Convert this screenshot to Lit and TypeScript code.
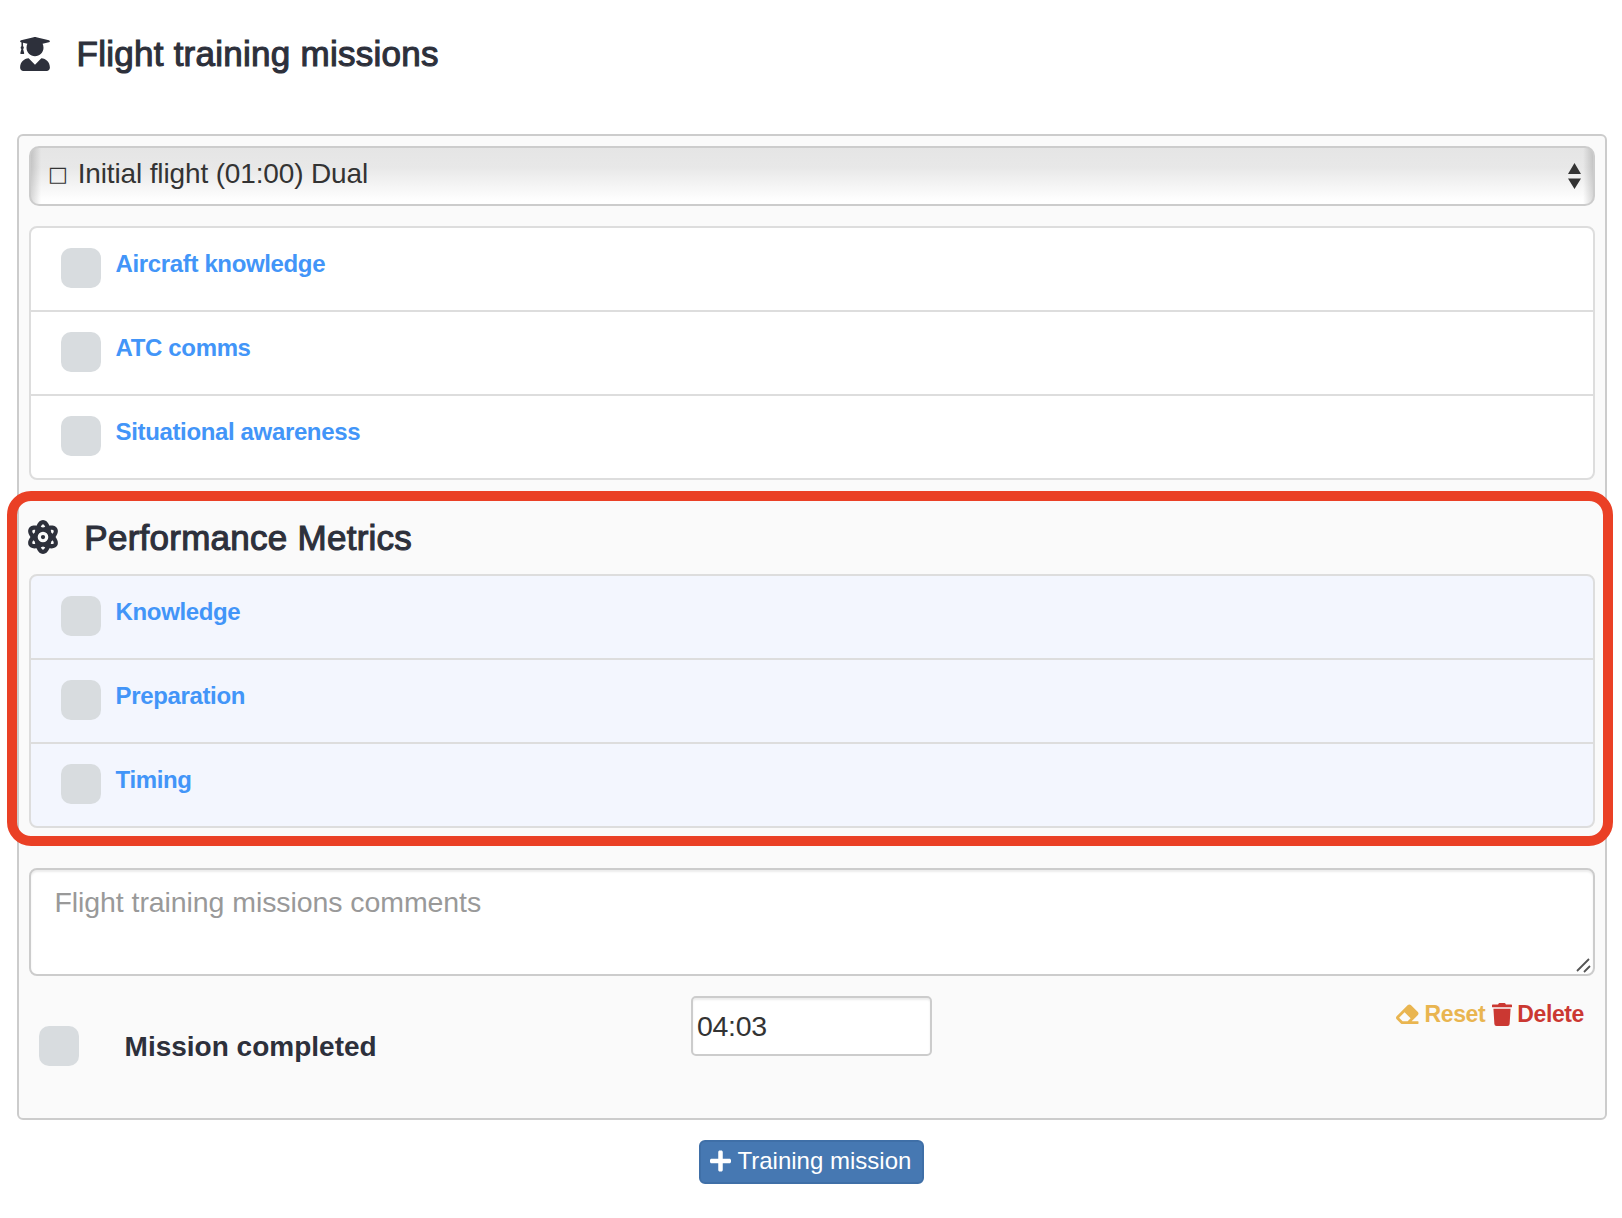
import { LitElement, html, css, svg } from "lit";
import { customElement, property } from "lit/decorators.js";

const ICONS: Record<string, { box: string; d: string }> = {
  graduate: {
    box: "0 0 448 512",
    d: "M319.4 320.6L224 416l-95.4-95.4C57.1 323.7 0 382.2 0 454.4v9.6c0 26.5 21.5 48 48 48h352c26.5 0 48-21.5 48-48v-9.6c0-72.2-57.1-130.7-128.6-133.8zM13.6 79.8l6.4 1.5v58.4c-7 4.2-12 11.5-12 20.3 0 8.4 4.6 15.4 11.1 19.7L3.5 242c-1.7 6.9 2.1 14 7.6 14h41.8c5.5 0 9.3-7.1 7.6-14l-15.6-62.3C51.4 175.4 56 168.4 56 160c0-8.8-5-16.1-12-20.3V87.1l66 15.9c-8.6 17.2-14 36.4-14 57 0 70.7 57.3 128 128 128s128-57.3 128-128c0-20.6-5.3-39.8-14-57l96.3-23.2c18.2-4.4 18.2-27.1 0-31.5l-190.4-46c-13-3.1-26.7-3.1-39.7 0L13.6 48.2c-18.1 4.5-18.1 27.2 0 31.6z",
  },
  atom: {
    box: "0 0 448 512",
    d: "M224 224a32 32 0 1 0 32 32A32.06 32.06 0 0 0 224 224Zm214.172-96c-10.877-19.5-40.51-50.75-116.275-41.875C300.392 34.875 267.634 0 224 0s-76.39 34.875-97.897 86.125C50.337 77.375 20.706 108.5 9.829 128-6.55 157.375-5.175 201.125 34.958 256-5.175 310.875-6.55 354.625 9.829 384c29.131 52.375 101.647 43.625 116.274 41.875C147.608 477.125 180.364 512 224 512s76.393-34.875 97.897-86.125c14.629 1.75 87.145 10.5 116.275-41.875C454.55 354.625 453.175 310.875 413.04 256 453.175 201.125 454.55 157.375 438.171 128ZM63.339 352c-4-7.25-.125-24.75 15.004-48.25 6.877 6.5 14.129 12.875 21.881 19.125 1.625 13.75 4 27.125 6.75 40.125C82.345 363.875 67.091 358.625 63.339 352Zm36.885-162.875c-7.752 6.25-15.004 12.625-21.881 19.125-15.129-23.5-19.004-41-15.004-48.25 3.377-6.125 16.379-11.5 37.885-11.5 1.75 0 3.875.375 5.75.375C104.099 162.25 101.849 175.625 100.224 189.125ZM224 64c9.502 0 22.256 13.5 33.883 37.25-11.252 3.75-22.504 8-33.883 12.875-11.377-4.875-22.629-9.125-33.883-12.875C201.745 77.5 214.497 64 224 64Zm0 384c-9.502 0-22.254-13.5-33.883-37.25 11.254-3.75 22.506-8 33.883-12.875C235.378 402.75 246.63 407 257.882 410.75 246.255 434.5 233.501 448 224 448Zm0-112a80 80 0 1 1 80-80A80 80 0 0 1 224 336ZM384.659 352c-3.625 6.625-19.004 11.875-43.635 11 2.752-13 5.127-26.375 6.752-40.125 7.752-6.25 15.004-12.625 21.879-19.125C384.784 327.25 388.659 344.75 384.659 352ZM369.655 208.25c-6.875-6.5-14.127-12.875-21.879-19.125-1.625-13.5-3.875-26.875-6.752-40.25 1.875 0 4.002-.375 5.752-.375 21.504 0 34.508 5.375 37.883 11.5C388.659 167.25 384.784 184.75 369.655 208.25Z",
  },
  eraser: {
    box: "0 0 512 512",
    d: "M497.941 273.941c18.745-18.745 18.745-49.137 0-67.882l-160-160c-18.745-18.745-49.136-18.746-67.883 0l-256 256c-18.745 18.745-18.745 49.137 0 67.882l96 96A48.004 48.004 0 0 0 144 480h356c6.627 0 12-5.373 12-12v-40c0-6.627-5.373-12-12-12H355.883l142.058-142.059zm-302.627-62.627l137.373 137.373L265.373 416H150.628l-80-80 124.686-124.686z",
  },
  trash: {
    box: "0 0 448 512",
    d: "M432 32H312l-9.4-18.7A24 24 0 0 0 281.1 0H166.8a23.72 23.72 0 0 0-21.4 13.3L136 32H16A16 16 0 0 0 0 48v32a16 16 0 0 0 16 16h416a16 16 0 0 0 16-16V48a16 16 0 0 0-16-16zM32 128L53.2 467a48 48 0 0 0 47.9 45h245.8a48 48 0 0 0 47.9-45L416 128H32z",
  },
  plus: {
    box: "0 0 448 512",
    d: "M416 208H272V64c0-17.67-14.33-32-32-32h-32c-17.67 0-32 14.33-32 32v144H32c-17.67 0-32 14.33-32 32v32c0 17.67 14.33 32 32 32h144v144c0 17.67 14.33 32 32 32h32c17.67 0 32-14.33 32-32V304h144c17.67 0 32-14.33 32-32v-32c0-17.67-14.33-32-32-32z",
  },
};

@customElement("ui-icon")
class UiIcon extends LitElement {
  @property() name = "plus";
  static styles = css`
    :host { display: block; flex: none; }
    svg { display: block; width: 100%; height: 100%; fill: currentColor; }
  `;
  render() {
    const icon = ICONS[this.name];
    return html`<svg viewBox=${icon.box} aria-hidden="true">${svg`<path d=${icon.d}></path>`}</svg>`;
  }
}

@customElement("check-list")
class CheckList extends LitElement {
  @property({ attribute: false }) items: string[] = [];
  static styles = css`
    :host { display: block; border: 2px solid #ddd; border-radius: 8px; background: var(--list-bg, #fff); }
    .row { display: flex; align-items: flex-start; box-sizing: border-box; height: 82px; padding: 20px 30px 0; }
    .row + .row { border-top: 2px solid #ddd; height: 84px; }
    .box { width: 40px; height: 40px; border-radius: 10px; background: #d8dcdf; flex: none; }
    .label { margin: 4px 0 0 14.6px; font-size: 24px; line-height: 24px; font-weight: 700; letter-spacing: -0.36px; color: #4295f8; white-space: nowrap; }
  `;
  render() {
    return html`${this.items.map(
      (item) => html`<div class="row"><span class="box"></span><span class="label">${item}</span></div>`
    )}`;
  }
}

@customElement("app-root")
class AppRoot extends LitElement {
  static styles = css`
    :host {
      display: block;
      box-sizing: border-box;
      width: 1622px;
      height: 1218px;
      background: #fff;
      color: #2d303b;
      font-family: "Liberation Sans", Arial, sans-serif;
      overflow: hidden;
    }
    * { box-sizing: border-box; }
    .title { display: flex; align-items: center; height: 36px; margin: 0; font-size: 35px; line-height: 36px; font-weight: 400; letter-spacing: 0.26px; -webkit-text-stroke: 1.1px currentColor; white-space: nowrap; }
    .title ui-icon { width: 30px; height: 34px; -webkit-text-stroke: 0; }
    .page-title { padding: 35px 0 0 20px; height: 72px; }
    .page-title span { margin: 1px 0 0 26.5px; }
    .panel { margin: 62px 15px 0 17px; height: 986px; padding: 10px; border: 2px solid #ccc; border-radius: 6px; background: #fafafa; }
    .select { display: flex; align-items: center; height: 60px; padding: 0 12px 4px 17px; border: 2px solid #ccc; border-radius: 10px; color: #333; font-size: 28px; line-height: 32px; letter-spacing: -0.14px;
      background:
        linear-gradient(90deg, rgba(0,0,0,.15), transparent 10px, transparent calc(100% - 10px), rgba(0,0,0,.15)),
        linear-gradient(#e5e5e5, #e8e8e8 35%, #fff 94%); }
    .mark { font-family: "DejaVu Sans", sans-serif; font-size: 21px; width: 29.7px; }
    .option { flex: 1; white-space: nowrap; }
    .arrows { width: 13px; height: 26px; margin-top: 4px; fill: #333; }
    .missions { margin-top: 20px; }
    .metrics { position: relative; margin-top: 38px; }
    .metrics check-list { --list-bg: #f3f6fe; margin-top: 18px; }
    .metrics .title { height: 38px; margin-left: -1px; }
    .metrics .title span { margin: 1px 0 0 26.3px; }
    .highlight { position: absolute; left: -22px; right: -18px; top: -27px; bottom: -18px; border: 10px solid #ea4025; border-radius: 24px; }
    .comments { position: relative; height: 108px; margin-top: 40px; padding: 16px 23.5px; border: 2px solid #ccc; border-radius: 8px; background: #fff; box-shadow: inset 0 2px 2px rgba(0,0,0,.075); color: #999; font-size: 28.5px; line-height: 32px; letter-spacing: -0.08px; }
    .grip { position: absolute; right: 2px; bottom: 1px; width: 15px; height: 15px; stroke: #555; stroke-width: 1.8; fill: none; }
    .footer { display: grid; grid-template-columns: 662px 1fr auto; align-items: start; padding-top: 20px; }
    .completed { display: flex; align-items: center; gap: 45.6px; padding: 30px 0 0 10px; font-size: 28px; font-weight: 700; line-height: 40px; }
    .completed .name { padding-top: 1px; margin-bottom: -1px; }
    .box { width: 40px; height: 40px; border-radius: 10px; background: #d8dcdf; }
    .time { width: 241px; height: 60px; padding: 12px 4px; border: 2px solid #ccc; border-radius: 5px; background: #fff; box-shadow: inset 0 2px 2px rgba(0,0,0,.075); color: #333; font-size: 28.5px; line-height: 32px; letter-spacing: -0.3px; }
    .actions { display: flex; align-items: flex-start; padding: 5px 11px 0 0; font-size: 23px; line-height: 26px; font-weight: 700; letter-spacing: -0.38px; }
    .reset, .delete { display: flex; align-items: center; }
    .reset { color: #e9b550; margin-right: 7px; }
    .delete { color: #cb3832; }
    .reset ui-icon { width: 22.5px; height: 22.5px; margin-right: 5.5px; }
    .delete ui-icon { width: 20px; height: 23px; margin-right: 5px; }
    .add { display: flex; align-items: center; width: 225px; height: 44px; margin: 20px 0 0 699px; padding: 0 0 2px 9px; border: 2px solid #3f6fa7; border-radius: 6px; background: #4678b2; color: #fff; font-size: 24px; line-height: 28px; white-space: nowrap; }
    .add ui-icon { width: 21px; height: 24px; margin: -1px 6.5px 0 0; }
  `;

  render() {
    return html`
      <h1 class="title page-title"><ui-icon name="graduate"></ui-icon><span>Flight training missions</span></h1>
      <section class="panel">
        <div class="select">
          <span class="mark">□</span><span class="option">Initial flight (01:00) Dual</span>
          <svg class="arrows" viewBox="0 0 13 26"><path d="M6.5 0L13 11H0zM6.5 26L0 15.5h13z"></path></svg>
        </div>
        <check-list class="missions" .items=${["Aircraft knowledge", "ATC comms", "Situational awareness"]}></check-list>
        <div class="metrics">
          <h2 class="title"><ui-icon name="atom"></ui-icon><span>Performance Metrics</span></h2>
          <check-list .items=${["Knowledge", "Preparation", "Timing"]}></check-list>
          <div class="highlight"></div>
        </div>
        <div class="comments">
          Flight training missions comments
          <svg class="grip" viewBox="0 0 15 15"><path d="M1 13L13 1M8 14L14 8"></path></svg>
        </div>
        <div class="footer">
          <div class="completed"><span class="box"></span><span class="name">Mission completed</span></div>
          <div class="time">04:03</div>
          <div class="actions">
            <span class="reset"><ui-icon name="eraser"></ui-icon>Reset</span>
            <span class="delete"><ui-icon name="trash"></ui-icon>Delete</span>
          </div>
        </div>
      </section>
      <div class="add"><ui-icon name="plus"></ui-icon>Training mission</div>
    `;
  }
}
